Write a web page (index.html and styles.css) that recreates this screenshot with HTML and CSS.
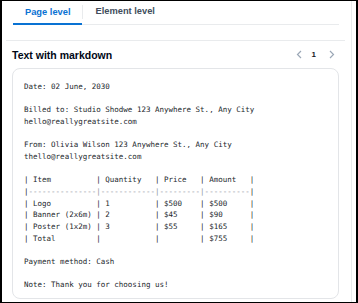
FILE: index.html
```html
<!DOCTYPE html>
<html lang="en">

<head>
    <meta charset="UTF-8">
    <meta name="viewport" content="width=device-width, initial-scale=1.0">
    <title>Text with markdown</title>
    <link rel="stylesheet" href="styles.css">
</head>

<body>
    <div class="frame">
        <div class="main">
            <!-- Tabs -->
            <div class="tabs">
                <div class="tab active">Page level</div>
                <div class="tab-sep"></div>
                <div class="tab">Element level</div>
            </div>

            <!-- Markdown panel -->
            <div class="panel">
                <div class="panel-head">
                    <h2>Text with markdown</h2>
                    <div class="pager">
                        <svg class="chev prev" width="6" height="9" viewBox="0 0 6 9"><path d="M5 1 L1.5 4.5 L5 8" /></svg>
                        <span class="page-num">1</span>
                        <svg class="chev next" width="6" height="9" viewBox="0 0 6 9"><path d="M1 1 L4.5 4.5 L1 8" /></svg>
                    </div>
                </div>
<pre class="md">Date: 02 June, 2030

Billed to: Studio Shodwe 123 Anywhere St., Any City
hello@reallygreatsite.com

From: Olivia Wilson 123 Anywhere St., Any City
thello@reallygreatsite.com

| Item          | Quantity   | Price   | Amount   |
|<span class="dash">---------------|------------|---------|----------</span>|
| Logo          | 1          | $500    | $500     |
| Banner (2x6m) | 2          | $45     | $90      |
| Poster (1x2m) | 3          | $55     | $165     |
| Total         |            |         | $755     |

Payment method: Cash

Note: Thank you for choosing us!</pre>
            </div>
        </div>
    </div>
</body>

</html>
```

FILE: styles.css
```css
/* Page frame */
body {
    margin: 0;
    background-color: white;
}

.frame {
    width: 358px;
    height: 303px;
    box-sizing: border-box;
    border: 1px solid black;
    border-left-width: 2px;
    border-right-width: 2px;
    display: flex;
    overflow: hidden;
}

.main {
    width: 350px;
    box-sizing: border-box;
    border-right: 1px solid #e9ebed;
    display: flex;
    flex-direction: column;
}

/* Tabs */
.tabs {
    display: flex;
    align-items: center;
    margin: 0 12px 0 11px;
    border-bottom: 1px solid #e9ebed;
    height: 23px;
    font-family: "Liberation Sans", Arial, sans-serif;
    font-weight: 700;
    font-size: 9.3px;
}

.tab {
    height: 21px;
    line-height: 21px;
    padding: 0 12px;
    color: #414d5c;
    border-bottom: 2px solid transparent;
}

.tab.active {
    color: #0972d3;
    border-bottom-color: #0972d3;
    margin-bottom: -1px;
    padding-bottom: 1px;
    height: 20px;
}

.tab-sep {
    width: 1px;
    height: 14px;
    background-color: #e9ebed;
    margin-bottom: 2px;
}

/* Panel */
.panel {
    margin: 15px 6px 0 4px;
    border-top: 1px solid #e9ebed;
    display: flex;
    flex-direction: column;
}

.panel-head {
    height: 27px;
    display: flex;
    align-items: center;
    justify-content: space-between;
    padding: 0 10px 0 6px;
}

.panel-head h2 {
    margin: 0;
    font-family: "Liberation Sans", Arial, sans-serif;
    font-size: 10.5px;
    font-weight: 700;
    color: #000716;
}

.pager {
    display: flex;
    align-items: center;
}

.chev path {
    fill: none;
    stroke: #9ba7b6;
    stroke-width: 1.2;
}

.chev.prev {
    margin-right: 10px;
}

.chev.next {
    margin-left: 13px;
}

.page-num {
    font-family: "Liberation Sans", Arial, sans-serif;
    font-size: 8px;
    font-weight: 700;
    color: #16191f;
}

/* Markdown box */
.md {
    margin: 0 6px;
    height: 231px;
    box-sizing: border-box;
    padding: 12px 11px;
    border: 1px solid #e3e5e8;
    border-radius: 8px;
    font-family: "DejaVu Sans Mono", monospace;
    font-size: 7.5px;
    line-height: 11.65px;
    color: #23272c;
    overflow: hidden;
}

.dash {
    color: #8c939b;
}
```
